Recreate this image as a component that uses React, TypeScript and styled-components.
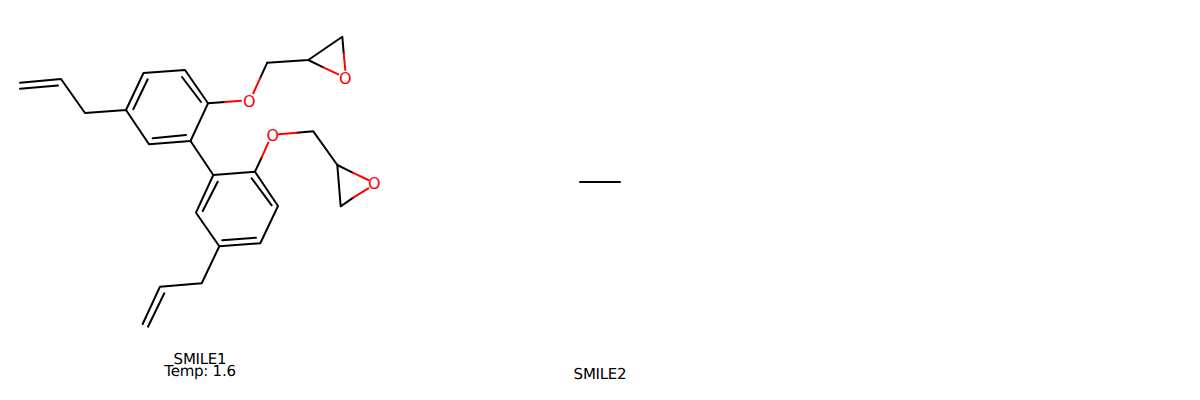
import React from 'react'
import styled, { createGlobalStyle } from 'styled-components'

const GlobalStyle = createGlobalStyle`
  html, body {
    margin: 0;
    padding: 0;
    background: #fff;
  }
`

const Grid = styled.div`
  display: grid;
  grid-template-columns: repeat(3, 400px);
  width: 1200px;
  height: 400px;
  overflow: hidden;
`

const Cell = styled.figure`
  display: flex;
  flex-direction: column;
  align-items: center;
  height: 400px;
  margin: 0;
`

const Drawing = styled.svg`
  display: block;
  flex: none;
`

const Legend = styled.figcaption<{ $lift?: number }>`
  margin-top: auto;
  padding-bottom: ${p => 20 + (p.$lift ?? 0)}px;
  font-family: 'DejaVu Sans', sans-serif;
  font-size: 15px;
  letter-spacing: -0.25px;
  line-height: 12px;
  text-rendering: geometricPrecision;
  color: #000;
  text-align: center;
`

const Bond = styled.path<{ $hetero?: boolean }>`
  fill: none;
  stroke: ${p => (p.$hetero ? '#ff0000' : '#000000')};
  stroke-width: 2;
  stroke-linecap: round;
  stroke-linejoin: round;
`

const Atom = styled.text`
  font-family: 'DejaVu Sans', sans-serif;
  font-size: 16px;
  fill: #ff0000;
  text-anchor: middle;
  dominant-baseline: central;
`

const OxygenLabel = ({ x, y }: { x: number; y: number }) => <Atom x={x} y={y}>O</Atom>

const carbonBonds = [
  'M20 82.7L61 79L85 113L126 110L143.5 73L185 70L208 103.3L190.5 141L149 144.3L126 110',
  'M20 88.7L58 85.6',
  'M133.3 109.3L147.7 79.3',
  'M152.7 138.3L186 135',
  'M182 77L201 102',
  'M208 103.3L225 102',
  'M267.3 62.7L260 78.3',
  'M267.3 62.7L308.3 60L342.3 36.7L343.7 53.3',
  'M308.3 60L323.3 67.3',
  'M190.5 141L213.3 175L255 171.7L278 206L260.3 243.3L219.3 246.3L196 212.7L213.3 175',
  'M251.7 178.3L271.7 205.3',
  'M256 237.7L222.3 240.3',
  'M202.7 211L217.7 181.7',
  'M255 171.7L261.7 157.3',
  'M296.7 132.7L313.3 131.3L337.3 165L340.7 206.3L353.3 197.7',
  'M337.3 165L352.7 172.7',
  'M219.3 246.3L201.7 283.3L160 286.7L142.7 324',
  'M164.3 293.3L148 326.7',
]

const oxygenBonds = [
  'M225 102L241 100.8',
  'M260 78.3L253.3 93.3',
  'M343.7 53.3L345.3 70',
  'M323.3 67.3L338.3 74.3',
  'M261.7 157.3L268.3 142.7',
  'M279 134.3L296.7 132.7',
  'M352.7 172.7L368.3 180',
  'M353.3 197.7L368.3 188.3',
]

const oxygens = [
  { x: 249.3, y: 101 },
  { x: 345.3, y: 78.3 },
  { x: 272.7, y: 135 },
  { x: 374.3, y: 183.3 },
]

export default function App() {
  return (
    <>
      <GlobalStyle />
      <Grid>
        <Cell>
          <Drawing width={400} height={340} viewBox="0 0 400 340">
            {carbonBonds.map(d => <Bond key={d} d={d} />)}
            {oxygenBonds.map(d => <Bond key={d} d={d} $hetero />)}
            {oxygens.map(o => <OxygenLabel key={o.x} x={o.x} y={o.y} />)}
          </Drawing>
          <Legend $lift={3}>
            <div>SMILE1</div>
            <div>Temp: 1.6</div>
          </Legend>
        </Cell>
        <Cell>
          <Drawing width={400} height={340} viewBox="0 0 400 340">
            <Bond d="M180 182L220 182" />
          </Drawing>
          <Legend>SMILE2</Legend>
        </Cell>
        <Cell />
      </Grid>
    </>
  )
}
